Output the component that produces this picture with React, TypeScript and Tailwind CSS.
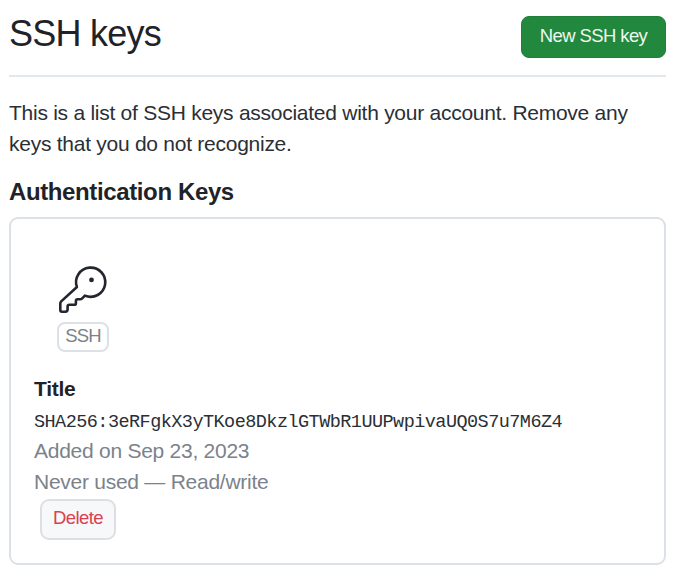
export default function App() {
  return (
    <main className="flex h-[578px] w-[690px] flex-col bg-white pl-[9px] pr-6 font-['Liberation_Sans',Arial,sans-serif] text-[21px] leading-[31px] tracking-[-0.26px] text-[#2a2f35]">
      <header className="flex h-[77px] items-start justify-between border-b-2 border-[#e2e7ec] pt-4">
        <h1 className="text-[36px] leading-[36px] tracking-[-0.75px] text-[#1f2328]">SSH keys</h1>
        <button className="h-[42px] w-[145px] rounded-[8px] border border-[#1f7f3a] bg-[#22883e] pb-[2px] text-[18.5px] leading-none tracking-[-0.6px] text-[#eef7f0]">New SSH key</button>
      </header>
      <p className="mt-[20px]">This is a list of SSH keys associated with your account. Remove any<br />keys that you do not recognize.</p>
      <h2 className="mt-[18px] text-[24px] font-bold leading-[30px] tracking-[-0.38px] text-[#1f2328]">Authentication Keys</h2>
      <section className="mt-[10px] flex h-[348px] flex-col items-start rounded-[9px] border-2 border-[#dbe1e6] pl-[23px] pt-[45px]">
        <div className="ml-[23px] flex w-[52px] flex-col items-center">
          <svg className="h-[50px] w-[50px]" viewBox="58 264 50 50" fill="none" stroke="#23262e" strokeWidth="2.6" strokeLinejoin="round">
            <path d="M76.9 287A14.6 14.6 0 1 1 84.9 295.6L82.2 298.3Q81.3 299.2 80 299.2H77.6Q75.9 299.2 75.9 301V303.2Q75.9 304.8 74.2 304.8H69.4Q67.6 304.8 67.6 306.8V309.3Q67.6 311.7 65.5 311.7H62Q60.3 311.7 60.3 310V303.5Q60.3 302.3 61.2 301.4L76.4 287.5Z" />
            <circle cx="91.5" cy="279.9" r="2.4" fill="#23262e" stroke="none" />
          </svg>
          <span className="mt-2 flex h-[30px] w-[52px] items-center justify-center rounded-[8px] border-2 border-[#dbe1e6] pb-[1px] text-[18.5px] leading-none tracking-[-0.8px] text-[#7b828a]">SSH</span>
        </div>
        <strong className="mt-[21px] text-[#1f2328]">Title</strong>
        <code className="mt-[3px] h-[28px] font-['Liberation_Mono',monospace] text-[18.5px] leading-[31px] tracking-[-0.54px]">SHA256:3eRFgkX3yTKoe8DkzlGTWbR1UUPwpivaUQ0S7u7M6Z4</code>
        <span className="text-[#7b828a]">Added on Sep 23, 2023</span>
        <span className="text-[#7b828a]">Never used — Read/write</span>
        <button className="ml-[6px] mt-[2px] h-[41px] w-[76px] rounded-[9px] border-2 border-[#dddfe2] bg-[#f6f8fa] pb-[2px] text-[18.5px] leading-none tracking-[-0.6px] text-[#db4050]">Delete</button>
      </section>
    </main>
  )
}
